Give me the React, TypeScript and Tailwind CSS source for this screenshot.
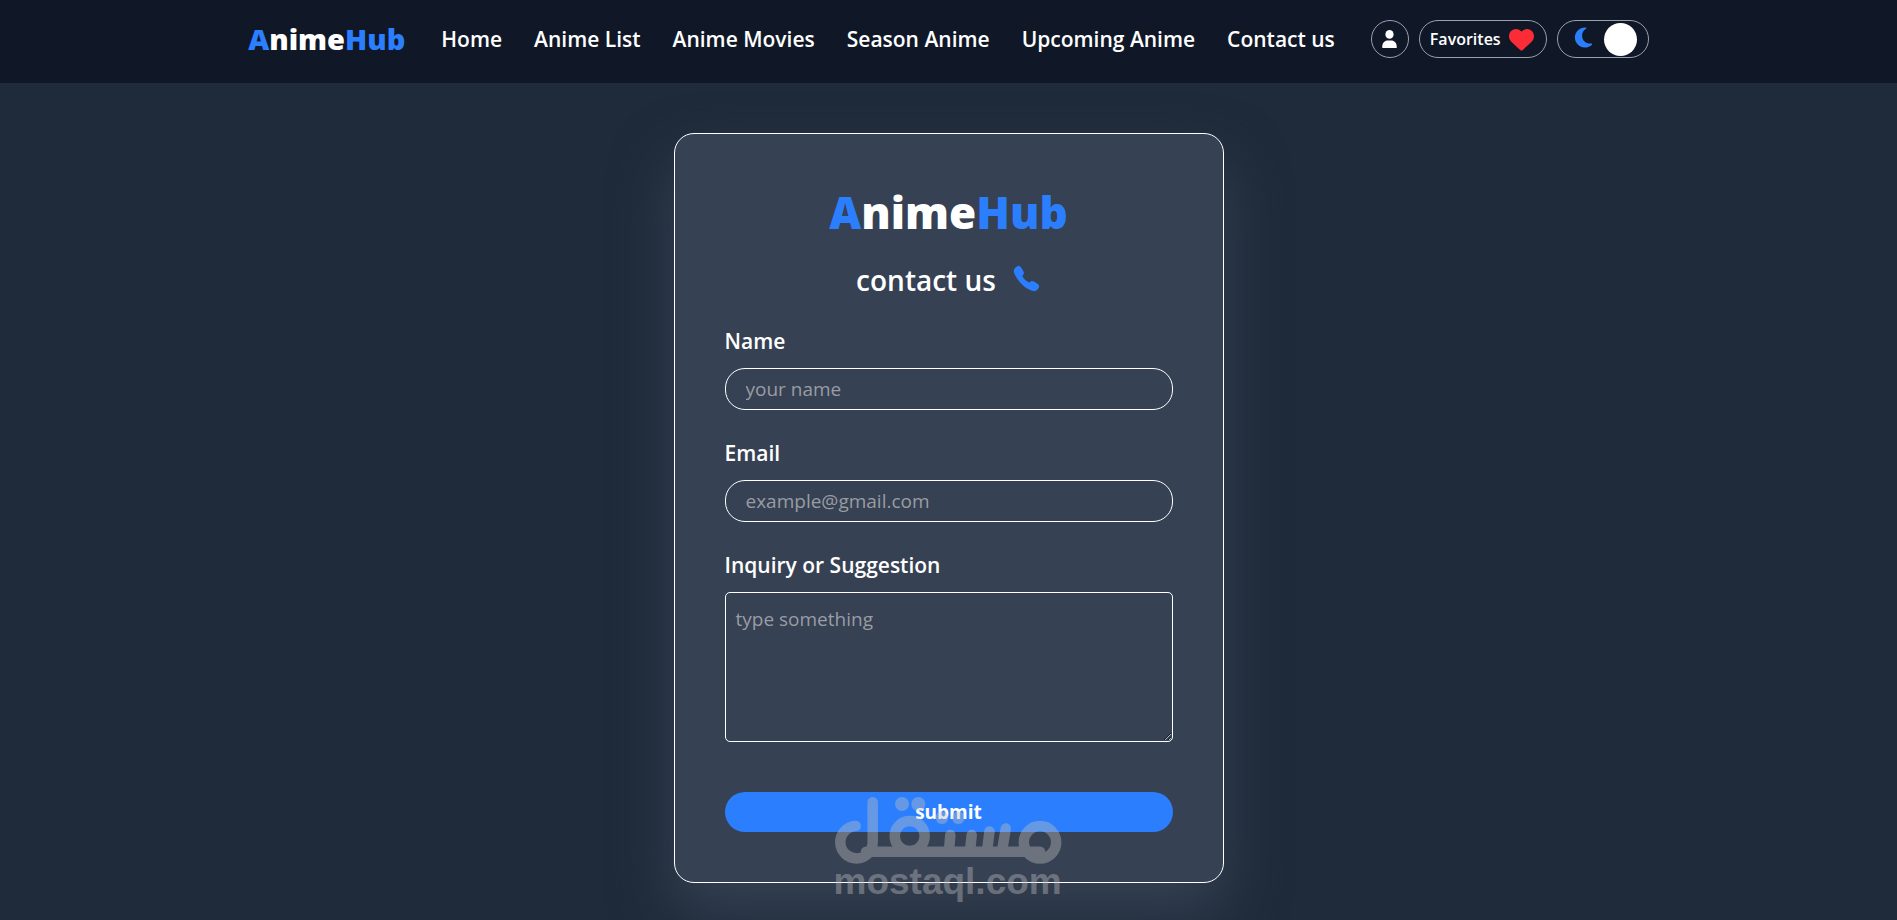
import { FaHeart, FaMoon } from "react-icons/fa6";
import { IoCall } from "react-icons/io5";

const links = ["Home", "Anime List", "Anime Movies", "Season Anime", "Upcoming Anime", "Contact us"];

function Brand({ className }: { className: string }) {
  return (
    <span className={className}>
      <span className="text-[#2b7fff]">A</span>nime<span className="text-[#2b7fff]">Hub</span>
    </span>
  );
}

function PersonIcon() {
  return (
    <svg viewBox="0 0 15 18" className="h-[18px] w-[15px]" fill="currentColor">
      <ellipse cx="7.5" cy="4.4" rx="4.1" ry="4.4" />
      <path d="M.3 18v-1.6c0-3.6 2.4-6 5.4-6h3.6c3 0 5.4 2.4 5.4 6V18z" />
    </svg>
  );
}

function Header() {
  return (
    <header className="flex h-[83px] items-start justify-center bg-gray-900 pt-[19px]">
      <div className="flex h-10 items-center">
        <a href="#" className="mr-9">
          <Brand className="text-[29px] leading-10 font-black" />
        </a>
        <nav className="flex items-center gap-8">
          {links.map((link) => (
            <a key={link} href="#" className="text-[21px] leading-8 font-semibold whitespace-nowrap">
              {link}
            </a>
          ))}
        </nav>
        <div className="ml-9 flex items-center gap-[10px]">
          <button aria-label="Account" className="flex size-[38px] items-center justify-center rounded-full border border-gray-400">
            <PersonIcon />
          </button>
          <button className="flex h-[38px] w-32 items-center gap-2 rounded-full border border-gray-400 pl-[10px] text-base font-semibold">
            Favorites
            <FaHeart size={25} className="shrink-0 text-[#fb2c36]" />
          </button>
          <button
            aria-label="Toggle dark mode"
            className="flex h-[38px] w-[92px] items-center justify-between rounded-full border border-gray-400 pr-[11px] pl-[14px]"
          >
            <FaMoon size={23} className="mb-1 text-[#2b7fff]" />
            <span className="size-[33px] rounded-full bg-white" />
          </button>
        </div>
      </div>
    </header>
  );
}

function Field({ id, label, type, placeholder }: { id: string; label: string; type: string; placeholder: string }) {
  return (
    <div className="mb-[26px] flex flex-col gap-[10px]">
      <label htmlFor={id} className="text-[21px] leading-[34px] font-semibold">
        {label}
      </label>
      <input
        id={id}
        type={type}
        placeholder={placeholder}
        className="h-[42px] w-full rounded-[20px] border border-white px-5 text-[19px] placeholder:text-[#999ca3]"
      />
    </div>
  );
}

function Watermark() {
  return (
    <div className="pointer-events-none absolute top-[663px] left-[159px] w-[228px] text-[#bebebe] opacity-40">
      <svg viewBox="0 0 228 68" className="block w-full" fill="none" stroke="currentColor" strokeWidth="10.5" strokeLinecap="round">
        <path d="M21.7 29A16.2 16.2 0 1 0 38.7 45.3V5.3" />
        <path d="M32 54.7H206" />
        <circle cx="206" cy="45.3" r="16.2" />
        <circle cx="75.7" cy="39" r="15" />
        <path d="M116.3 38 115 54M137.7 38 136 54M155.5 34.5 153 54M171.8 31.5 168 54" />
        <g fill="currentColor" stroke="none">
          <circle cx="68" cy="7" r="7" />
          <circle cx="84.3" cy="7" r="7" />
          <circle cx="108" cy="20.7" r="6.3" />
          <circle cx="124.3" cy="20.7" r="6.3" />
        </g>
      </svg>
      <p className="text-center font-['Liberation_Sans',sans-serif] text-[37px] leading-[34px] font-bold whitespace-nowrap">mostaql.com</p>
    </div>
  );
}

export default function App() {
  return (
    <div className="min-h-screen bg-[#1f2a3a] font-['Open_Sans','Noto_Sans',sans-serif] text-white">
      <Header />
      <main className="flex justify-center px-4 py-[50px]">
        <form className="relative w-full max-w-[550px] rounded-[20px] border border-white bg-[#364153] p-[50px] shadow-[0_30px_60px_#364153]">
          <h1 className="flex justify-center">
            <Brand className="text-[44px] leading-[56px] font-black" />
          </h1>
          <h2 className="mt-5 mb-6 flex items-center justify-center gap-4 text-[28px] leading-10 font-semibold">
            contact us
            <IoCall size={29} className="mb-1 text-[#2b7fff]" />
          </h2>
          <Field id="name" label="Name" type="text" placeholder="your name" />
          <Field id="email" label="Email" type="email" placeholder="example@gmail.com" />
          <div className="flex flex-col gap-[10px]">
            <label htmlFor="message" className="text-[21px] leading-[34px] font-semibold">
              Inquiry or Suggestion
            </label>
            <textarea
              id="message"
              placeholder="type something"
              className="block h-[150px] w-full rounded-[5px] border border-white p-[10px] text-[19px] leading-8 placeholder:text-[#999ca3]"
            />
          </div>
          <button type="submit" className="mt-[50px] block h-10 w-full rounded-[20px] bg-[#2b7fff] text-[19px] font-bold">
            submit
          </button>
          <Watermark />
        </form>
      </main>
    </div>
  );
}
